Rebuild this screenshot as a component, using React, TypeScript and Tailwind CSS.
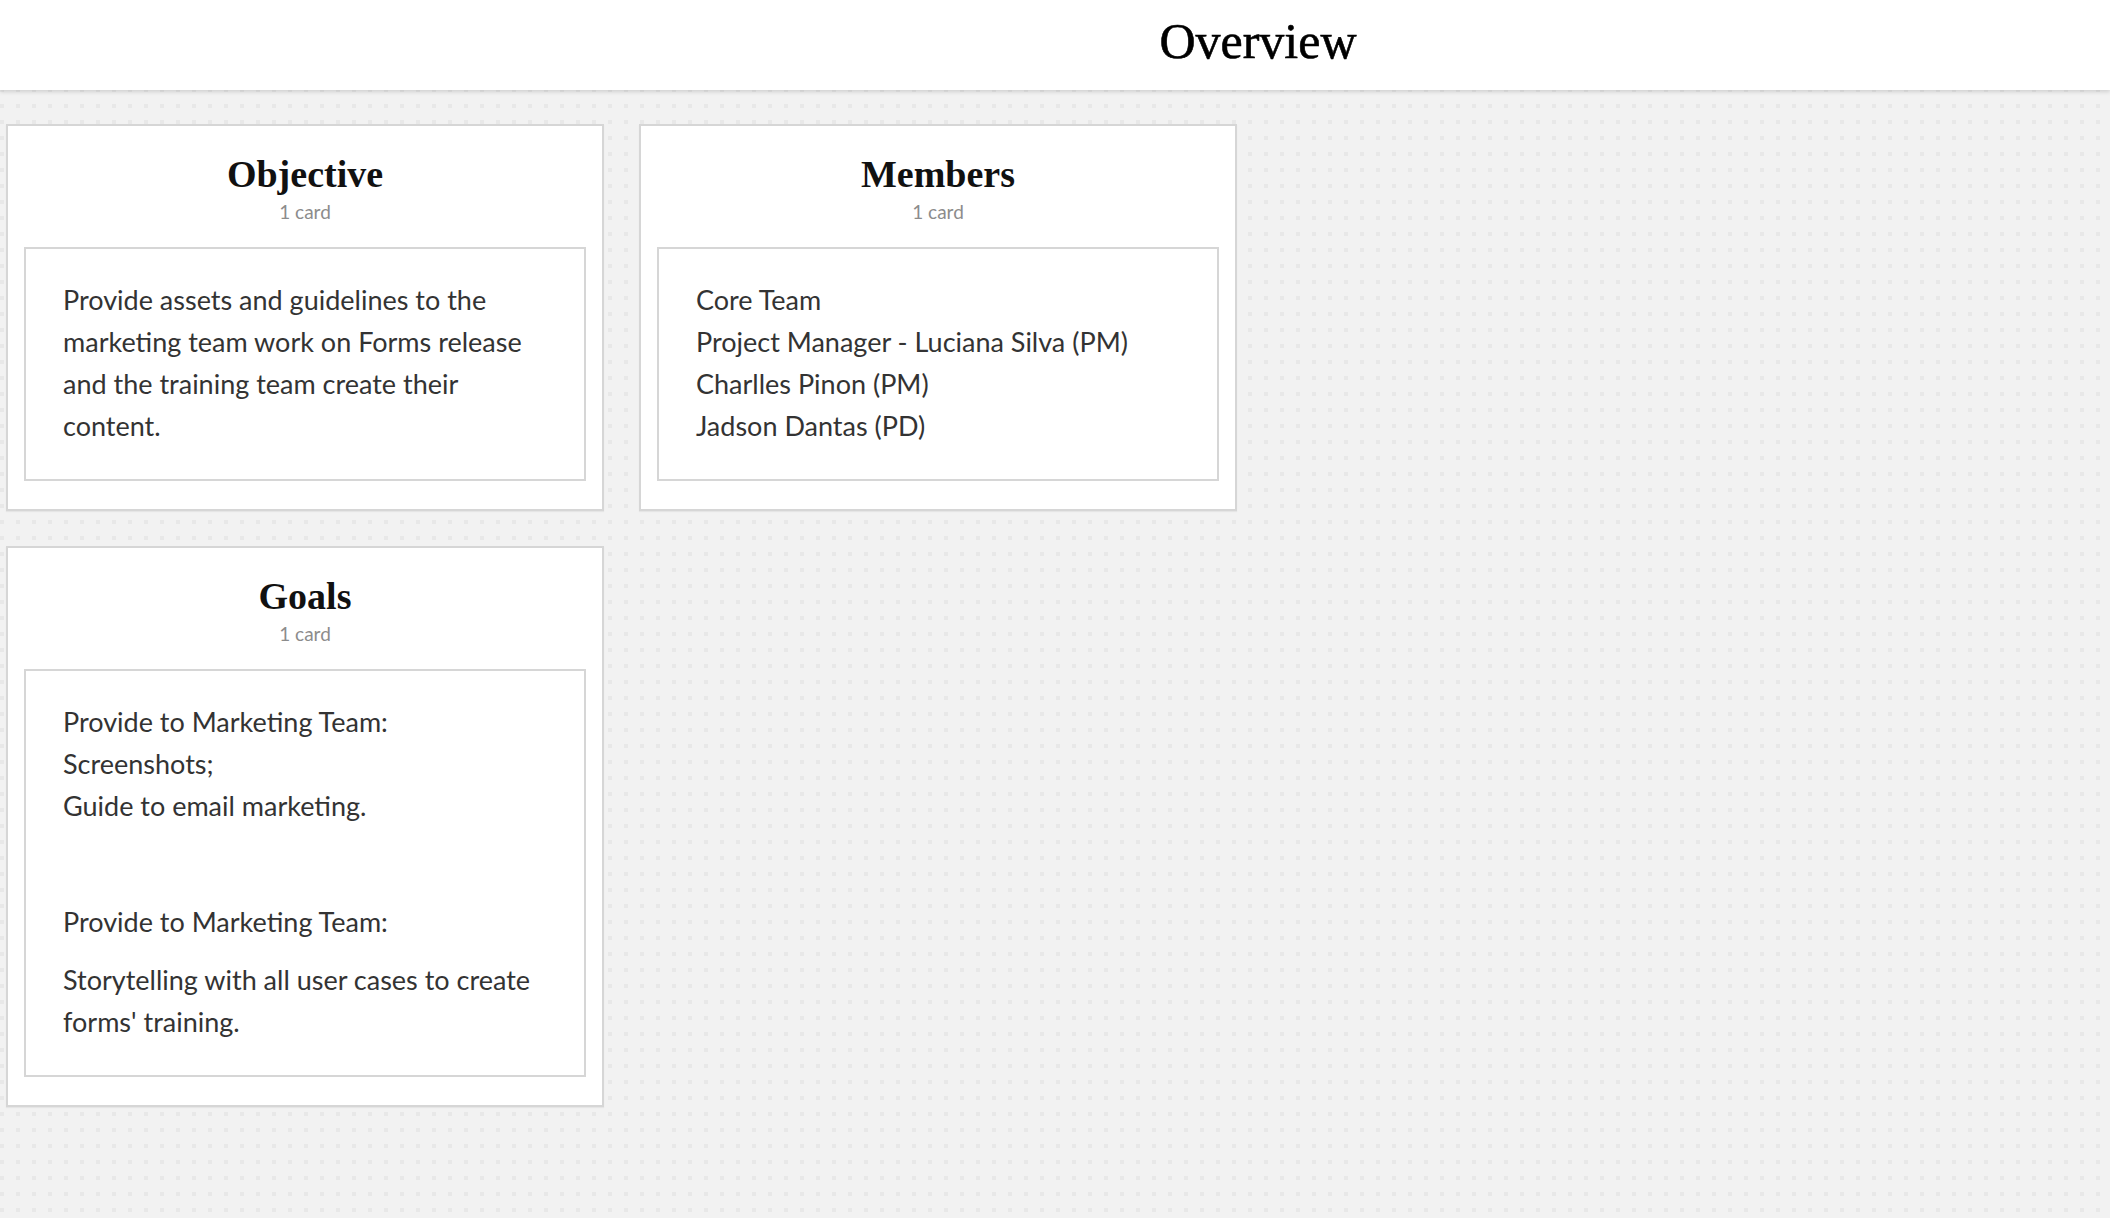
import type { ReactNode } from "react";

const serif = "font-['Liberation_Serif','Times_New_Roman',serif]";
const sans = "font-['Lato','Open_Sans',sans-serif]";

function Column({ title, count, children }: { title: string; count: string; children: ReactNode }) {
  return (
    <section className="bg-white border-2 border-[#d6d6d6] shadow-[0_1px_1px_rgba(0,0,0,0.05)] px-[16px] pt-[24px] pb-[28px]">
      <h2 className={`${serif} text-center text-[38px] leading-[48px] font-bold text-[#111]`}>{title}</h2>
      <div className={`${sans} mt-[2px] text-center text-[19px] leading-[24px] text-[#8c8c8c]`}>{count}</div>
      <div
        className={`${sans} mt-[23px] border-2 border-[#d6d6d6] px-[37px] pt-[30px] pb-[32px] text-[27px] leading-[42px] text-[#333]`}
      >
        {children}
      </div>
    </section>
  );
}

export default function App() {
  return (
    <div className="min-h-screen bg-[#f2f2f2] bg-[conic-gradient(at_4px_4px,transparent_75%,#e8e8e8_0)] bg-size-[16px_16px] bg-position-[0px_8px]">
      <header className="h-[90px] bg-white shadow-[0_2px_4px_rgba(0,0,0,0.14)] flex items-center justify-center pl-[406px] pb-[8px] relative z-10">
        <h1 className={`${serif} text-[50px] leading-none text-black [-webkit-text-stroke:0.6px_black]`}>Overview</h1>
      </header>

      <main className="grid grid-cols-[598px_598px] gap-[35px] items-start pl-[6px] pt-[34px] pb-[40px]">
        <Column title="Objective" count="1 card">
          <p>
            Provide assets and guidelines to the marketing team work on Forms release and the training
            team create their content.
          </p>
        </Column>

        <Column title="Members" count="1 card">
          <p>
            Core Team
            <br />
            Project Manager - Luciana Silva (PM)
            <br />
            Charlles Pinon (PM)
            <br />
            Jadson Dantas (PD)
          </p>
        </Column>

        <Column title="Goals" count="1 card">
          <p>
            Provide to Marketing Team:
            <br />
            Screenshots;
            <br />
            Guide to email marketing.
          </p>
          <p className="mt-[16px]">
            <br />
          </p>
          <p className="mt-[16px]">Provide to Marketing Team:</p>
          <p className="mt-[16px]">Storytelling with all user cases to create forms' training.</p>
        </Column>
      </main>
    </div>
  );
}
